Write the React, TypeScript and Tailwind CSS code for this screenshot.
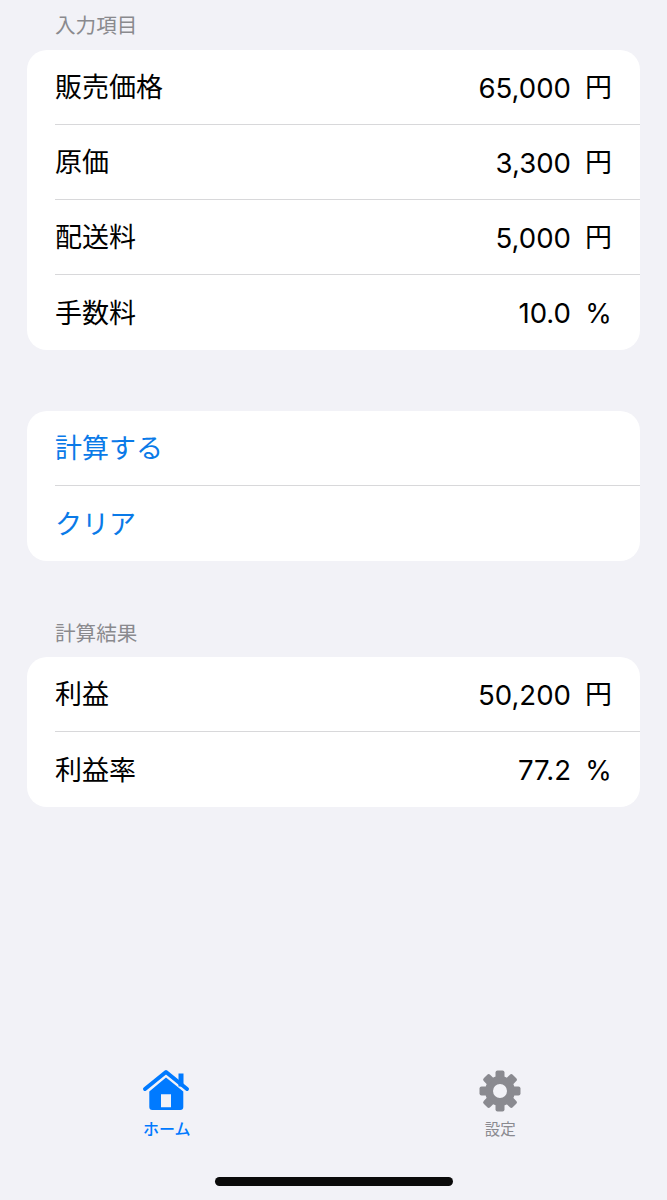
const font = { fontFamily: '"Inter", "Noto Sans CJK JP", sans-serif' };

const inputs = [
  { label: '販売価格', value: '65,000', unit: '円' },
  { label: '原価', value: '3,300', unit: '円' },
  { label: '配送料', value: '5,000', unit: '円' },
  { label: '手数料', value: '10.0', unit: '%' },
];

const results = [
  { label: '利益', value: '50,200', unit: '円' },
  { label: '利益率', value: '77.2', unit: '%' },
];

function Row({ label, value, unit, last }: { label: string; value: string; unit: string; last: boolean }) {
  return (
    <div className={`ml-[28px] h-[75px] pt-[3px] pr-[28px] flex items-center justify-between ${last ? '' : 'border-b border-[#d8d8da]'}`}>
      <span className="text-[27px] text-black">{label}</span>
      <div className="flex items-center gap-[14px]">
        <span className="text-[27.6px] text-black">{value}</span>
        <span className="w-[27px] text-center text-[27px] text-black">{unit}</span>
      </div>
    </div>
  );
}

function HomeIcon() {
  return (
    <svg width="50" height="46" viewBox="0 0 50 46">
      <path d="M36.5 5.5h5v13h-5z" fill="#007aff" />
      <path d="M3 21 L24 4 L45 21" fill="none" stroke="#007aff" strokeWidth="4" strokeLinecap="round" strokeLinejoin="round" />
      <path
        fillRule="evenodd"
        d="M24 9.5 L41.3 23.6 V39 a3 3 0 0 1 -3 3 H10.3 a3 3 0 0 1 -3 -3 V23.6 Z M19 26.3 V39.3 H29 V26.3 Z"
        fill="#007aff"
      />
    </svg>
  );
}

function GearIcon() {
  return (
    <svg width="46" height="46" viewBox="-23 -23 46 46">
      <circle r="11" fill="none" stroke="#8a8a90" strokeWidth="8" />
      {[0, 45, 90, 135, 180, 225, 270, 315].map((a) => (
        <rect key={a} x="-4.5" y="-20.5" width="9" height="8" rx="2" fill="#8a8a90" transform={`rotate(${a})`} />
      ))}
    </svg>
  );
}

export default function App() {
  return (
    <div className="w-[667px] h-[1200px] bg-[#f2f2f7] flex flex-col" style={font}>
      <div className="px-[27px] pt-[12px]">
        <p className="ml-[28px] mb-[10px] text-[20.6px] leading-[28px] text-[#8a8a8e]">入力項目</p>
        <div className="bg-white rounded-[20px]">
          {inputs.map((row, i) => (
            <Row key={row.label} {...row} last={i === inputs.length - 1} />
          ))}
        </div>

        <div className="mt-[61px] bg-white rounded-[20px]">
          <div className="ml-[28px] h-[75px] pt-[3px] flex items-center border-b border-[#d8d8da] text-[27px] text-[#0a7ae8]">計算する</div>
          <div className="ml-[28px] h-[75px] pt-[3px] flex items-center text-[27px] text-[#0a7ae8]">クリア</div>
        </div>

        <p className="ml-[28px] mt-[59px] mb-[9px] text-[20.6px] leading-[28px] text-[#8a8a8e]">計算結果</p>
        <div className="bg-white rounded-[20px]">
          {results.map((row, i) => (
            <Row key={row.label} {...row} last={i === results.length - 1} />
          ))}
        </div>
      </div>

      {/* Tab bar */}
      <div className="mt-auto grid grid-cols-2">
        <div className="flex flex-col items-center">
          <HomeIcon />
          <span className="mt-[4px] text-[16px] leading-[22px] font-medium text-[#007aff]">ホーム</span>
        </div>
        <div className="flex flex-col items-center">
          <GearIcon />
          <span className="mt-[5px] mb-[-1px] text-[15.5px] leading-[22px] text-[#8a8a90]">設定</span>
        </div>
      </div>
      <div className="mt-[37px] mb-[14px] mx-auto w-[238px] h-[9px] rounded-full bg-[#0a0a0a]" />
    </div>
  );
}
